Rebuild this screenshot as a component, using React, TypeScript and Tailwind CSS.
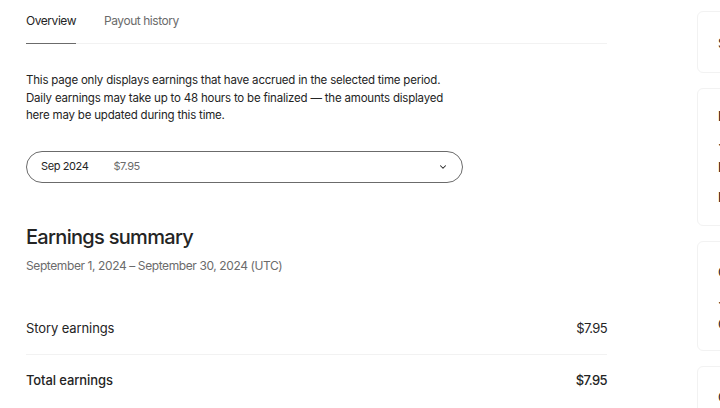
import React from 'react';

const SideCard = ({ h, children }: { h: string; children: React.ReactNode }) => (
    <div className={`${h} shrink-0 rounded-md border border-[#f2f2f2] bg-white pl-5 flex flex-col text-[13px] leading-4 text-[#242424] whitespace-nowrap`}>
        {children}
    </div>
);

const App = () => {
    return (
        <div className="w-[720px] h-[408px] overflow-hidden bg-white flex font-['Inter',sans-serif] text-[#242424]">
            <div className="w-[581px] ml-[26px] shrink-0 flex flex-col">
                {/* tabs */}
                <div className="flex border-b border-[#f2f2f2] h-[44px]">
                    <div className="flex flex-col justify-end border-b border-[#6b6b6b] mb-[-1px] pb-[14px]">
                        <span className="text-[12px] leading-4 tracking-[-0.45px] text-[#242424]">Overview</span>
                    </div>
                    <div className="ml-[28px] flex flex-col justify-end pb-[14px]">
                        <span className="text-[12px] leading-4 tracking-[-0.45px] text-[#6b6b6b]">Payout history</span>
                    </div>
                </div>

                <p className="mt-[28px] text-[11.5px] leading-[17.5px] tracking-[-0.2px] w-[440px]">
                    This page only displays earnings that have accrued in the selected time period.
                    Daily earnings may take up to 48 hours to be finalized — the amounts displayed
                    here may be updated during this time.
                </p>

                <div className="mt-[26px] w-[437px] h-[32px] rounded-full border border-[#6b6b6b] flex items-center pl-[14px] pr-[14px]">
                    <span className="text-[11px] tracking-[-0.4px]">Sep 2024</span>
                    <span className="ml-[25px] text-[11px] tracking-[-0.4px] text-[#6b6b6b]">$7.95</span>
                    <svg className="ml-auto" width="10" height="10" viewBox="0 0 24 24" fill="none" stroke="#242424" strokeWidth="2.5" strokeLinecap="round" strokeLinejoin="round">
                        <path d="M6 9l6 6 6-6" />
                    </svg>
                </div>

                <h2 className="mt-[42px] text-[20px] leading-6 font-medium tracking-[-0.7px]">Earnings summary</h2>
                <p className="mt-[9px] text-[12px] leading-4 tracking-[-0.4px] text-[#6b6b6b]">September 1, 2024 – September 30, 2024 (UTC)</p>

                <div className="mt-[31px] flex justify-between items-center h-[50px] border-b border-[#f2f2f2]">
                    <span className="text-[13px] tracking-[-0.1px]">Story earnings</span>
                    <span className="text-[13px] tracking-[-0.6px]">$7.95</span>
                </div>
                <div className="flex justify-between items-center h-[52px]">
                    <span className="text-[13px] tracking-[-0.1px] font-medium">Total earnings</span>
                    <span className="text-[13px] tracking-[-0.6px] font-medium">$7.95</span>
                </div>
            </div>

            <div className="ml-[90px] w-[200px] shrink-0 flex flex-col pt-[11px] gap-[15px]">
                <SideCard h="h-[62px]">
                    <span className="mt-[23px]">Sign up</span>
                </SideCard>
                <SideCard h="h-[138px]">
                    <span className="mt-[19px] font-medium">Earnings</span>
                    <span className="mt-[12px]">·</span>
                    <span className="mt-[7px] font-medium">Balance</span>
                    <span className="mt-[14px] font-medium">Payouts</span>
                </SideCard>
                <SideCard h="h-[110px]">
                    <span className="mt-[22px]">Grow</span>
                    <span className="mt-[14px]">·</span>
                    <span className="mt-[6px]">Grow</span>
                </SideCard>
                <SideCard h="h-[60px]">
                    <span className="mt-[22px]">Get</span>
                </SideCard>
            </div>
        </div>
    );
};

export default App;
